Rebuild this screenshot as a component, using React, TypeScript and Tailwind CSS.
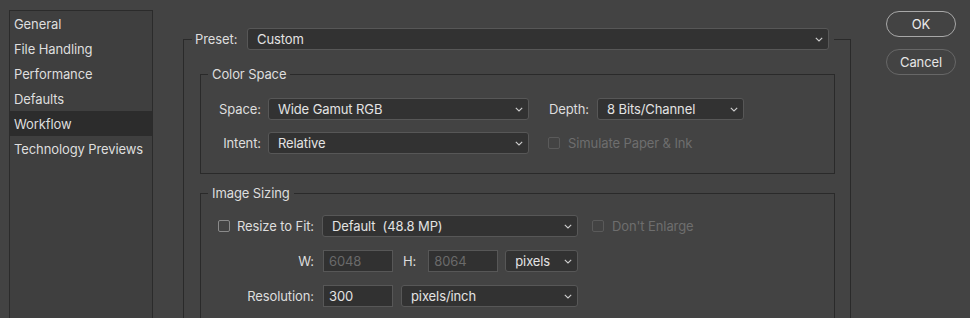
import React from 'react';

const Chevron: React.FC = () => (
  <svg width="8" height="5" viewBox="0 0 8 5" className="shrink-0">
    <path d="M0.8 0.8 L4 4 L7.2 0.8" fill="none" stroke="#cfcfcf" strokeWidth="1.1" />
  </svg>
);

interface SelectProps {
  value: string;
  width: string;
}

const Select: React.FC<SelectProps> = ({ value, width }) => (
  <div
    className={`${width} h-[22px] flex items-center justify-between pl-[9px] pr-[5px] rounded-[3px] border border-[#575757] bg-[#323232] text-[#e3e3e3] whitespace-pre`}
  >
    <span>{value}</span>
    <Chevron />
  </div>
);

const TextInput: React.FC<{ value: string; disabled?: boolean }> = ({ value, disabled = false }) => (
  <div
    className={`w-[70px] h-[22px] flex items-center pl-[5px] border border-[#575757] bg-[#313131] ${
      disabled ? 'text-[#6a6a6a]' : 'text-[#e3e3e3]'
    }`}
  >
    {value}
  </div>
);

const Checkbox: React.FC<{ disabled?: boolean }> = ({ disabled = false }) => (
  <div
    className={`w-[12px] h-[12px] shrink-0 rounded-[2px] border ${
      disabled ? 'border-[#5a5a5a]' : 'border-[#8a8a8a]'
    }`}
  />
);

const navItems = ['General', 'File Handling', 'Performance', 'Defaults', 'Workflow', 'Technology Previews'];

export default function App() {
  return (
    <div className="w-[970px] h-[318px] overflow-hidden bg-[#434343] flex text-[13px] leading-[16px] text-[#dedede] font-['Inter','Liberation_Sans',sans-serif] tracking-[-0.1px]">
      {/* sidebar */}
      <aside className="ml-[9px] mt-[10px] w-[144px] h-[340px] shrink-0 border border-[#2b2b2b] bg-[#3f3f3f]">
        {navItems.map((item) => (
          <div
            key={item}
            className={`h-[25px] flex items-center pl-[4px] ${item === 'Workflow' ? 'bg-[#2c2c2c]' : ''}`}
          >
            {item}
          </div>
        ))}
      </aside>

      {/* main */}
      <div className="ml-[30px] mt-[28px] w-[668px] shrink-0">
        <fieldset className="border border-[#2a2a2a] p-0 min-w-0 h-[320px]">
          <legend className="ml-[8px] pl-[3px] pr-[5px]">
            <div className="flex items-center">
              <span className="w-[52px]">Preset:</span>
              <Select value="Custom" width="w-[582px]" />
            </div>
          </legend>

          <div className="pl-[16px] pr-[15px] pt-[16px]">
            <fieldset className="border border-[#2a2a2a] p-0 min-w-0 pt-[16px] pb-[19px]">
              <legend className="ml-[7px] px-[4px]">Color Space</legend>
              <div className="flex items-center">
                <span className="w-[60px] text-right mr-[7px]">Space:</span>
                <Select value="Wide Gamut RGB" width="w-[261px]" />
                <span className="ml-[20px] w-[48px]">Depth:</span>
                <Select value="8 Bits/Channel" width="w-[147px]" />
              </div>
              <div className="flex items-center mt-[12px]">
                <span className="w-[60px] text-right mr-[7px]">Intent:</span>
                <Select value="Relative" width="w-[261px]" />
                <div className="ml-[19px] flex items-center gap-[8px] text-[#6e6e6e]">
                  <Checkbox disabled />
                  <span>Simulate Paper &amp; Ink</span>
                </div>
              </div>
            </fieldset>

            <fieldset className="mt-[11px] border border-[#2a2a2a] p-0 min-w-0 pt-[14px] pb-[20px]">
              <legend className="ml-[7px] px-[4px]">Image Sizing</legend>
              <div className="flex items-center">
                <div className="w-[113px] flex items-center justify-end gap-[7px]">
                  <Checkbox />
                  <span>Resize to Fit:</span>
                </div>
                <div className="ml-[8px]">
                  <Select value="Default  (48.8 MP)" width="w-[256px]" />
                </div>
                <div className="ml-[14px] flex items-center gap-[8px] text-[#6e6e6e]">
                  <Checkbox disabled />
                  <span>Don&apos;t Enlarge</span>
                </div>
              </div>
              <div className="flex items-center mt-[13px]">
                <span className="w-[113px] text-right mr-[9px]">W:</span>
                <TextInput value="6048" disabled />
                <span className="ml-[10px] mr-[12px]">H:</span>
                <TextInput value="8064" disabled />
                <div className="ml-[7px]">
                  <Select value="pixels" width="w-[73px]" />
                </div>
              </div>
              <div className="flex items-center mt-[13px]">
                <span className="w-[113px] text-right mr-[9px]">Resolution:</span>
                <TextInput value="300" />
                <div className="ml-[8px]">
                  <Select value="pixels/inch" width="w-[177px]" />
                </div>
              </div>
            </fieldset>
          </div>
        </fieldset>
      </div>

      {/* buttons */}
      <div className="ml-[35px] mt-[11px] flex flex-col gap-[12px]">
        <button className="w-[70px] h-[26px] rounded-full border border-[#a8a8a8] text-[#ececec]">OK</button>
        <button className="w-[70px] h-[26px] rounded-full border border-[#676767] text-[#e6e6e6]">Cancel</button>
      </div>
    </div>
  );
}
